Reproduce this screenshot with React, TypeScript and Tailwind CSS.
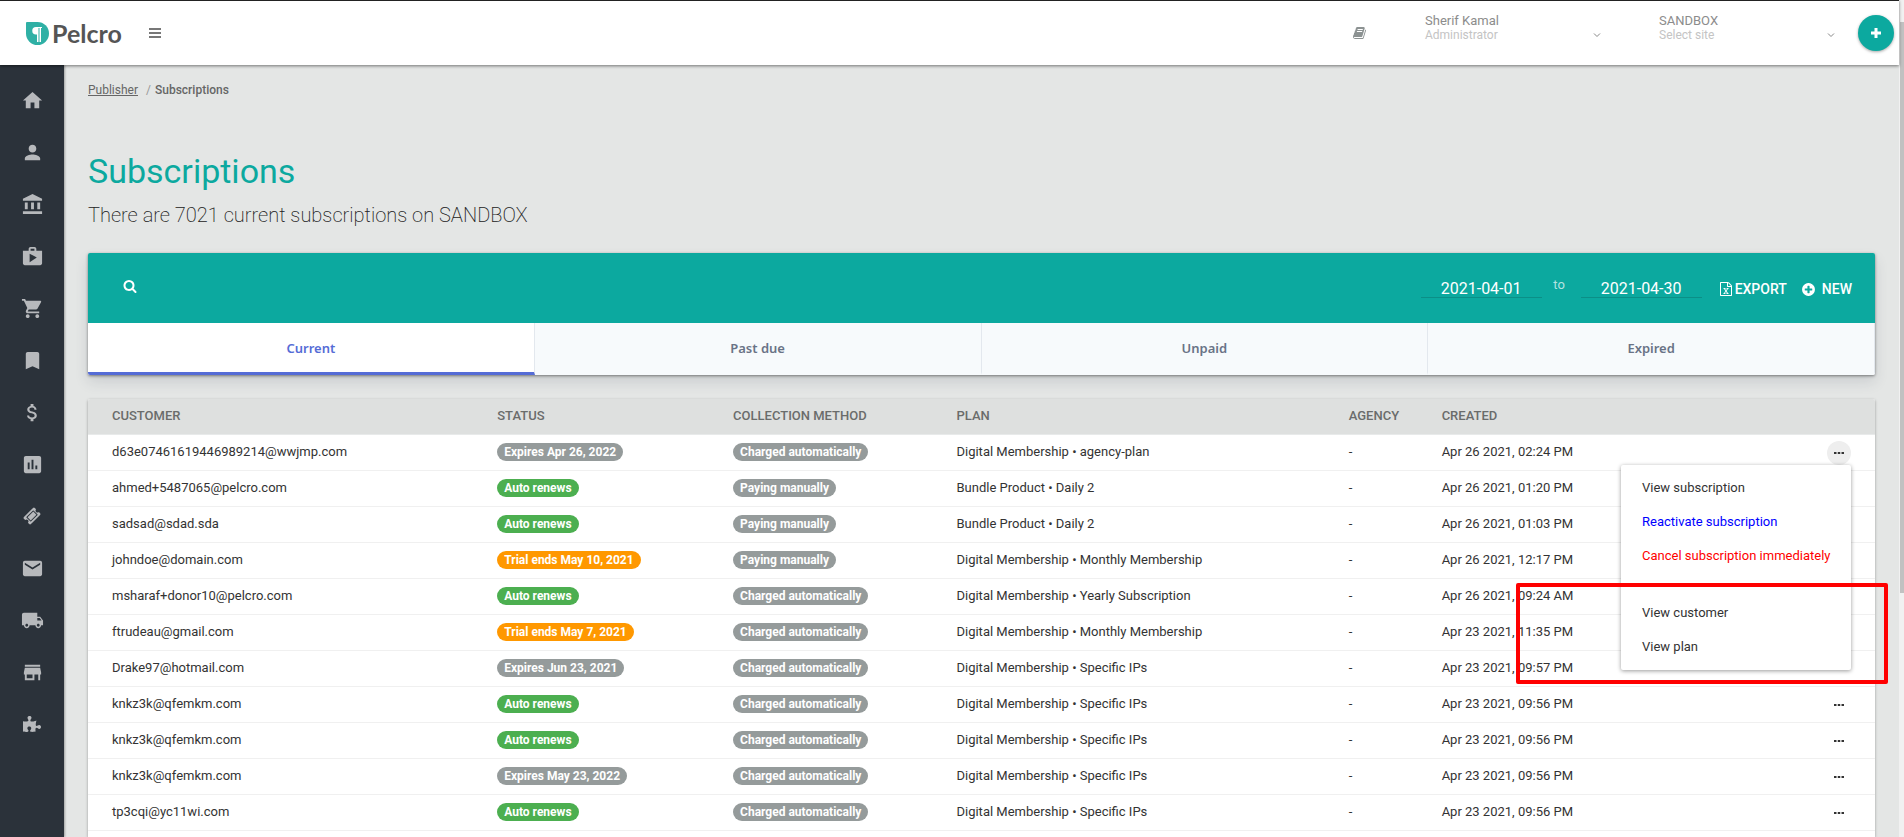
import { useState } from "react"

import clsx from "clsx"

import { FaPuzzlePiece } from "react-icons/fa"

import {
    MdAccountBalance,
    MdAssessment,
    MdAttachMoney,
    MdBookmark,
    MdHome,
    MdLocalShipping,
    MdMail,
    MdPerson,
    MdShop,
    MdShoppingCart,
    MdStore,
} from "react-icons/md"

type Tone = "gray" | "green" | "orange"

type Subscription = {
    customer: string
    status: string
    tone: Tone
    method: string
    plan: string
    created: string
}

const AUTO = "Charged automatically"
const MANUAL = "Paying manually"

const subscriptions: Subscription[] = [
    { customer: "d63e07461619446989214@wwjmp.com", status: "Expires Apr 26, 2022", tone: "gray", method: AUTO, plan: "Digital Membership • agency-plan", created: "Apr 26 2021, 02:24 PM" },
    { customer: "ahmed+5487065@pelcro.com", status: "Auto renews", tone: "green", method: MANUAL, plan: "Bundle Product • Daily 2", created: "Apr 26 2021, 01:20 PM" },
    { customer: "sadsad@sdad.sda", status: "Auto renews", tone: "green", method: MANUAL, plan: "Bundle Product • Daily 2", created: "Apr 26 2021, 01:03 PM" },
    { customer: "johndoe@domain.com", status: "Trial ends May 10, 2021", tone: "orange", method: MANUAL, plan: "Digital Membership • Monthly Membership", created: "Apr 26 2021, 12:17 PM" },
    { customer: "msharaf+donor10@pelcro.com", status: "Auto renews", tone: "green", method: AUTO, plan: "Digital Membership • Yearly Subscription", created: "Apr 26 2021, 09:24 AM" },
    { customer: "ftrudeau@gmail.com", status: "Trial ends May 7, 2021", tone: "orange", method: AUTO, plan: "Digital Membership • Monthly Membership", created: "Apr 23 2021, 11:35 PM" },
    { customer: "Drake97@hotmail.com", status: "Expires Jun 23, 2021", tone: "gray", method: AUTO, plan: "Digital Membership • Specific IPs", created: "Apr 23 2021, 09:57 PM" },
    { customer: "knkz3k@qfemkm.com", status: "Auto renews", tone: "green", method: AUTO, plan: "Digital Membership • Specific IPs", created: "Apr 23 2021, 09:56 PM" },
    { customer: "knkz3k@qfemkm.com", status: "Auto renews", tone: "green", method: AUTO, plan: "Digital Membership • Specific IPs", created: "Apr 23 2021, 09:56 PM" },
    { customer: "knkz3k@qfemkm.com", status: "Expires May 23, 2022", tone: "gray", method: AUTO, plan: "Digital Membership • Specific IPs", created: "Apr 23 2021, 09:56 PM" },
    { customer: "tp3cqi@yc11wi.com", status: "Auto renews", tone: "green", method: AUTO, plan: "Digital Membership • Specific IPs", created: "Apr 23 2021, 09:56 PM" },
]

const tones: Record<Tone, string> = {
    gray: "bg-[#959b9b]",
    green: "bg-[#4caf50]",
    orange: "bg-[#ff9800]",
}

const BOOK =
    "M1639 478q40 57 18 129l-275 906q-19 64-76.5 107.5t-122.5 43.5h-923q-77 0-148.5-53.5t-99.5-131.5q-24-67-2-127 0-4 3-27t4-37q1-8-3-21.5t-3-19.5q2-11 8-21t16.5-23.5 16.5-23.5q23-38 45-91.5t30-91.5q3-10 .5-30t-.5-28q3-11 17-28t17-23q21-36 42-92t25-90q1-9-2.5-32t.5-28q4-13 22-30.5t22-22.5q19-26 42.5-84.5t27.5-96.5q1-8-3-25.5t-2-26.5q2-8 9-18t18-23 17-21q8-12 16.5-30.5t15-35 16-36 19.5-32 26.5-23.5 36-11.5 47.5 5.5l-1 3q38-9 51-9h761q74 0 114 56t18 130l-274 906q-36 119-71.5 153.5t-128.5 34.5h-869q-27 0-38 15-11 16-1 43 24 70 144 70h923q29 0 56-15.5t35-41.5l300-987q7-22 5-57 38 15 59 43zm-1064 2q-4 13 2 22.5t20 9.5h608q13 0 25.5-9.5t16.5-22.5l21-64q4-13-2-22.5t-20-9.5h-608q-13 0-25.5 9.5t-16.5 22.5zm-83 256q-4 13 2 22.5t20 9.5h608q13 0 25.5-9.5t16.5-22.5l21-64q4-13-2-22.5t-20-9.5h-608q-13 0-25.5 9.5t-16.5 22.5z"

const SEARCH =
    "M1216 832q0-185-131.5-316.5t-316.5-131.5-316.5 131.5-131.5 316.5 131.5 316.5 316.5 131.5 316.5-131.5 131.5-316.5zm512 832q0 52-38 90t-90 38q-54 0-90-38l-343-342q-179 124-399 124-143 0-273.5-55.5t-225-150-150-225-55.5-273.5 55.5-273.5 150-225 225-150 273.5-55.5 273.5 55.5 225 150 150 225 55.5 273.5q0 220-124 399l343 343q37 37 37 90z"

const EXCEL =
    "M1596 380q28 28 48 76t20 88v1152q0 40-28 68t-68 28h-1344q-40 0-68-28t-28-68v-1600q0-40 28-68t68-28h896q40 0 88 20t76 48zm-444-244v376h376q-10-29-22-41l-313-313q-12-12-41-22zm384 1528v-1024h-416q-40 0-68-28t-28-68v-416h-768v1536h1280zm-979-234v106h281v-106h-75l103-161q5-7 10-16.5t7.5-13.5 3.5-4h2q1 4 5 10 2 4 4.5 7.5t6 8 6.5 8.5l107 161h-76v106h291v-106h-68l-192-273 195-282h67v-107h-279v107h74l-103 159q-4 7-10 16.5t-9 13.5l-2 3h-2q-1-4-5-10-6-11-17-23l-106-159h76v-107h-290v107h68l189 272-194 283h-68z"

const PLUS_CIRCLE =
    "M1344 960v-128q0-26-19-45t-45-19h-256v-256q0-26-19-45t-45-19h-128q-26 0-45 19t-19 45v256h-256q-26 0-45 19t-19 45v128q0 26 19 45t45 19h256v256q0 26 19 45t45 19h128q26 0 45-19t19-45v-256h256q26 0 45-19t19-45zm320-64q0 209-103 385.5t-279.5 279.5-385.5 103-385.5-103-279.5-279.5-103-385.5 103-385.5 279.5-279.5 385.5-103 385.5 103 279.5 279.5 103 385.5z"

const TICKET =
    "M1024 452l316 316-572 572-316-316zm-211 979l618-618q19-19 19-45t-19-45l-362-362q-18-18-45-18t-45 18l-618 618q-19 19-19 45t19 45l362 362q18 18 45 18t45-18zm889-637l-907 908q-37 37-90.5 37t-90.5-37l-126-126q56-56 56-136t-56-136-136-56-136 56l-125-126q-37-37-37-90.5t37-90.5l907-906q37-37 90.5-37t90.5 37l125 125q-56 56-56 136t56 136 136 56 136-56l126 125q37 37 37 90.5t-37 90.5z"

function Glyph({ path, className }: { path: string; className?: string }) {
    return (
        <svg
            viewBox="0 0 1792 1792"
            fill="currentColor"
            className={clsx("shrink-0", className)}
            aria-hidden="true"
        >
            <path d={path} />
        </svg>
    )
}

const navItems = [
    { label: "Home", icon: <MdHome size={23} /> },
    { label: "Customers", icon: <MdPerson size={23} /> },
    { label: "Accounts", icon: <MdAccountBalance size={23} /> },
    { label: "Products", icon: <MdShop size={23} /> },
    { label: "Orders", icon: <MdShoppingCart size={23} /> },
    { label: "Subscriptions", icon: <MdBookmark size={23} /> },
    { label: "Payments", icon: <MdAttachMoney size={23} /> },
    { label: "Reports", icon: <MdAssessment size={23} /> },
    { label: "Coupons", icon: <Glyph path={TICKET} className="size-[18px]" /> },
    { label: "Emails", icon: <MdMail size={23} /> },
    { label: "Shipping", icon: <MdLocalShipping size={23} /> },
    { label: "Store", icon: <MdStore size={23} /> },
    { label: "Integrations", icon: <FaPuzzlePiece size={18} /> },
]

const tabs = ["Current", "Past due", "Unpaid", "Expired"]

function Logo() {
    return (
        <a href="#" className="flex items-center gap-[3px]">
            <svg
                viewBox="0 0 23 23"
                className="size-[23px]"
                aria-hidden="true"
            >
                <path
                    d="M1 0H11.500a11.500 11.500 0 0 1 0 23A11.500 11.500 0 0 1 0 11.500V1A1 1 0 0 1 1 0Z"
                    fill="#2fb0a5"
                />
                <path
                    d="M10 5h6v1h-1v14h-1.500V6h-1v14H11v-7.500H10a3.750 3.750 0 0 1 0-7.500Z"
                    fill="#fff"
                />
            </svg>

            <span className="font-['Lato',sans-serif] text-[25px] leading-7 font-bold text-[#555]">
                Pelcro
            </span>
        </a>
    )
}

function HeaderPicker({ title, hint }: { title: string; hint: string }) {
    return (
        <button
            type="button"
            aria-haspopup="listbox"
            className="flex w-[179px] items-end justify-between pb-2.5 text-left"
        >
            <span className="flex flex-col leading-[14px]">
                <span className="text-[13px] text-[#8c8c8c]">
                    {title}
                </span>
                <span className="text-xs leading-[14px] text-[#c4c4c4]">
                    {hint}
                </span>
            </span>

            <svg
                viewBox="0 0 14 14"
                className="size-3.5"
                fill="none"
                stroke="#888"
                aria-hidden="true"
            >
                <path d="m4 5.500 3 3 3-3" />
            </svg>
        </button>
    )
}

function Header() {
    return (
        <header className="z-10 flex h-[65px] shrink-0 items-center border-t border-[#222] bg-white pr-[5px] pl-[26px] shadow-[0_1px_3px_rgba(0,0,0,0.5)]">
            <Logo />

            <button
                type="button"
                aria-label="Toggle menu"
                className="ml-[27px]"
            >
                <svg
                    viewBox="0 0 12 10"
                    className="h-2.5 w-3"
                    fill="#777"
                    aria-hidden="true"
                >
                    <path d="M0 0h12v2H0zM0 4h12v2H0zM0 8h12v2H0z" />
                </svg>
            </button>

            <div className="ml-auto flex items-center">
                <a
                    href="#"
                    aria-label="Documentation"
                    className="mr-[58px] text-[#8c9292]"
                >
                    <Glyph path={BOOK} className="size-3.5" />
                </a>

                <div className="flex gap-[55px]">
                    <HeaderPicker
                        title="Sherif Kamal"
                        hint="Administrator"
                    />
                    <HeaderPicker title="SANDBOX" hint="Select site" />
                </div>

                <button
                    type="button"
                    aria-label="Create"
                    className="ml-5 flex size-9 items-center justify-center rounded-full bg-[#0ca99f] shadow-[0_1px_3px_rgba(0,0,0,0.35)]"
                >
                    <svg
                        viewBox="0 0 10 10"
                        className="size-2.5"
                        fill="#fff"
                        aria-hidden="true"
                    >
                        <path d="M3.500 0h3v3.500H10v3H6.500V10h-3V6.500H0v-3h3.500z" />
                    </svg>
                </button>
            </div>
        </header>
    )
}

function Sidebar() {
    return (
        <nav className="flex w-16 shrink-0 flex-col bg-[#2b323a] pt-[9px] text-[#b7b9bc] shadow-[1px_0_2px_rgba(0,0,0,0.3)]">
            {navItems.map((item) => (
                <a
                    key={item.label}
                    href="#"
                    aria-label={item.label}
                    className="flex h-[52px] shrink-0 items-center justify-center"
                >
                    {item.icon}
                </a>
            ))}
        </nav>
    )
}

function DateField({
    label,
    value,
    onChange,
}: {
    label: string
    value: string
    onChange: (value: string) => void
}) {
    return (
        <input
            type="text"
            aria-label={label}
            value={value}
            onChange={(e) => onChange(e.target.value)}
            className="h-5 w-[121px] border-b border-[#0b8f87] pt-0.5 text-center text-base leading-4 text-white outline-none"
        />
    )
}

function FilterBar() {
    const [from, setFrom] = useState("2021-04-01")
    const [to, setTo] = useState("2021-04-30")

    return (
        <div className="flex h-[70px] items-center bg-[#0ca99f] pr-[23px] pl-[35px] text-white">
            <button type="button" aria-label="Search" className="pb-1">
                <Glyph path={SEARCH} className="size-3.5" />
            </button>

            <div className="ml-auto flex items-center">
                <DateField label="From" value={from} onChange={setFrom} />
                <span className="w-[39px] pr-1 pb-1.5 text-center text-[13px] leading-4 text-white/70">
                    to
                </span>
                <DateField label="To" value={to} onChange={setTo} />

                <button
                    type="button"
                    className="ml-[17px] flex items-center gap-0.5 pt-0.5 text-sm leading-5 font-medium"
                >
                    <Glyph path={EXCEL} className="size-3.5" />
                    EXPORT
                </button>

                <button
                    type="button"
                    className="ml-3.5 flex items-center gap-1.5 pt-0.5 text-sm leading-5 font-medium"
                >
                    <Glyph path={PLUS_CIRCLE} className="size-[15px]" />
                    NEW
                </button>
            </div>
        </div>
    )
}

function Tabs() {
    const [active, setActive] = useState("Current")

    return (
        <div role="tablist" className="grid grid-cols-4">
            {tabs.map((tab) => (
                <button
                    key={tab}
                    type="button"
                    role="tab"
                    aria-selected={tab === active}
                    onClick={() => setActive(tab)}
                    className={clsx(
                        "h-[52px] border-r border-b-3 border-r-[#e3e8ee] pt-0.5 font-['Noto_Sans',sans-serif] text-[13px] font-semibold",
                        tab === active
                            ? "border-b-[#556cd6] bg-white text-[#556cd6]"
                            : "border-b-transparent bg-[#f7fafc] text-[#697386]"
                    )}
                >
                    {tab}
                </button>
            ))}
        </div>
    )
}

function Badge({ tone, children }: { tone: Tone; children: string }) {
    return (
        <span
            className={clsx(
                "block w-fit rounded-full px-[7px] text-xs leading-[18px] font-bold whitespace-nowrap text-white",
                tones[tone]
            )}
        >
            {children}
        </span>
    )
}

function RowMenu() {
    return (
        <div
            role="menu"
            className="absolute top-full right-0 z-10 flex w-[230px] flex-col rounded-xs bg-white py-1.5 text-[13px] shadow-[0_1px_4px_rgba(0,0,0,0.4)]"
        >
            <MenuItem className="text-[#333]">View subscription</MenuItem>
            <MenuItem className="text-[#00f]">
                Reactivate subscription
            </MenuItem>
            <MenuItem className="text-[#f00]">
                Cancel subscription immediately
            </MenuItem>
            <hr className="my-[11px] border-[#e8e8e8]" />
            <MenuItem className="text-[#333]">View customer</MenuItem>
            <MenuItem className="text-[#333]">View plan</MenuItem>
        </div>
    )
}

function MenuItem({
    className,
    children,
}: {
    className: string
    children: string
}) {
    return (
        <button
            type="button"
            role="menuitem"
            className={clsx(
                "h-[34px] px-[21px] text-left whitespace-nowrap",
                className
            )}
        >
            {children}
        </button>
    )
}

function SubscriptionTable() {
    const [openRow, setOpenRow] = useState<number | null>(0)

    return (
        <table className="w-full table-fixed border-separate border-spacing-0 text-left text-[13px] leading-5 text-[#333]">
            <thead>
                <tr className="h-9 text-[#6a6c6b] [&>th]:border-b [&>th]:border-[#e8eaea] [&>th]:bg-[#dee0df] [&>th]:pb-0.5 [&>th]:font-medium">
                    <th className="w-[22.9%] rounded-tl-xs pl-6">CUSTOMER</th>
                    <th className="w-[13.2%]">STATUS</th>
                    <th className="w-[12.5%]">COLLECTION METHOD</th>
                    <th className="w-[21.95%]">PLAN</th>
                    <th className="w-[5.2%]">AGENCY</th>
                    <th>CREATED</th>
                    <th className="w-20 rounded-tr-xs" aria-label="Actions" />
                </tr>
            </thead>

            <tbody>
                {subscriptions.map((row, index) => (
                    <tr
                        key={index}
                        className="h-9 [&>td]:border-b [&>td]:border-[#f0f0f0] [&>td:not(:last-child)]:pb-0.5"
                    >
                        <td className="pl-6">{row.customer}</td>
                        <td>
                            <Badge tone={row.tone}>{row.status}</Badge>
                        </td>
                        <td>
                            <Badge tone="gray">{row.method}</Badge>
                        </td>
                        <td>{row.plan}</td>
                        <td>-</td>
                        <td>{row.created}</td>
                        <td className="pr-6">
                            <div className="relative ml-auto w-6">
                                <button
                                    type="button"
                                    aria-label="Row actions"
                                    aria-expanded={openRow === index}
                                    onClick={() =>
                                        setOpenRow(
                                            openRow === index ? null : index
                                        )
                                    }
                                    className={clsx(
                                        "flex size-6 items-center justify-center rounded-full",
                                        openRow === index && "bg-[#eee]"
                                    )}
                                >
                                    <svg
                                        viewBox="0 0 10 2"
                                        className="h-0.5 w-2.5"
                                        fill="#333"
                                        aria-hidden="true"
                                    >
                                        <path d="M0 0h2.500v2H0zM3.750 0h2.500v2H3.750zM7.500 0H10v2H7.500z" />
                                    </svg>
                                </button>

                                {openRow === index && <RowMenu />}
                            </div>
                        </td>
                    </tr>
                ))}
            </tbody>
        </table>
    )
}

export default function App() {
    return (
        <div className="relative flex h-screen overflow-hidden bg-[#e4e6e5] font-['Roboto',sans-serif]">
            <div className="flex min-w-0 flex-1 flex-col">
                <Header />

                <div className="flex min-h-0 flex-1">
                    <Sidebar />

                    <main className="flex min-w-0 flex-1 flex-col px-6 pt-4">
                        <nav
                            aria-label="Breadcrumb"
                            className="flex text-xs leading-[18px] text-[#666]"
                        >
                            <a href="#" className="underline">
                                Publisher
                            </a>
                            <span className="w-[17px] pl-2 text-[#999]">
                                /
                            </span>
                            <span className="font-medium">
                                Subscriptions
                            </span>
                        </nav>

                        <h1 className="mt-[52px] text-[34px] leading-10 text-[#0ca99f]">
                            Subscriptions
                        </h1>

                        <p className="mt-2.5 text-xl leading-7 font-extralight text-[#222]">
                            There are 7021 current subscriptions on SANDBOX
                        </p>

                        <section className="mt-6 shrink-0 rounded-xs shadow-[0_1px_3px_rgba(0,0,0,0.45),0_7px_14px_rgba(60,66,87,0.14)]">
                            <div className="overflow-hidden rounded-xs">
                                <FilterBar />
                                <Tabs />
                            </div>
                        </section>

                        <section className="mt-6 grow rounded-t-xs bg-white shadow-[0_1px_3px_rgba(0,0,0,0.35)]">
                            <SubscriptionTable />
                        </section>
                    </main>
                </div>
            </div>

            <div className="flex w-[5px] shrink-0 flex-col bg-[#f1f1f1] pt-[22px] pl-px">
                <div className="h-[70%] bg-[#c1c1c1]" />
            </div>

            {/* highlight over the lower half of the open menu */}
            <div className="pointer-events-none absolute top-[583px] right-4 z-20 h-[101px] w-[372px] rounded-xs border-4 border-[#f00]" />
        </div>
    )
}
